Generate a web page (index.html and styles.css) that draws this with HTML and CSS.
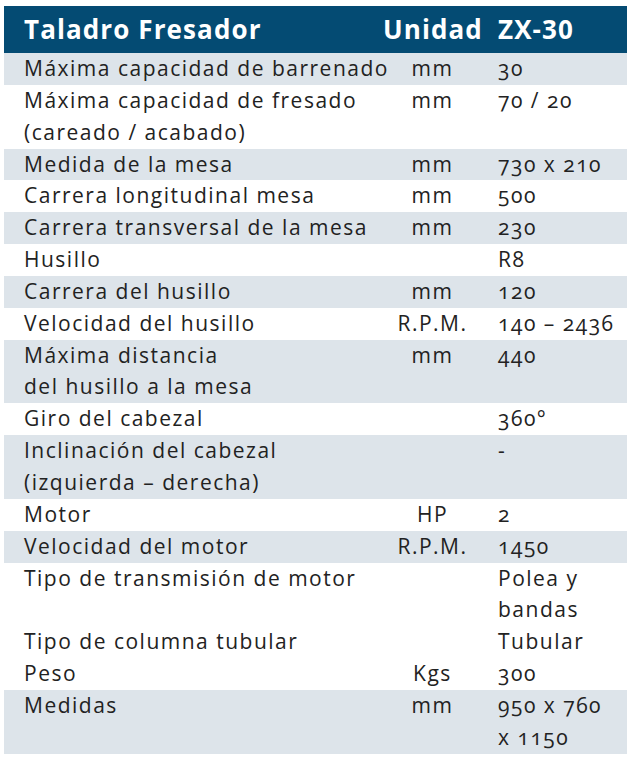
FILE: index.html
```html
<!DOCTYPE html>
<html lang="es">
<head>
<meta charset="utf-8">
<title>Taladro Fresador ZX-30</title>
<link rel="stylesheet" href="styles.css">
</head>
<body>
<table class="specs">
  <colgroup>
    <col class="c-name">
    <col class="c-unit">
    <col class="c-val">
  </colgroup>
  <thead>
    <tr><th class="name">Taladro Fresador</th><th class="unit">Unidad</th><th class="val">ZX-30</th></tr>
  </thead>
  <tbody>
    <tr class="alt"><td class="name">Máxima capacidad de barrenado</td><td class="unit">mm</td><td class="val">30</td></tr>
    <tr><td class="name">Máxima capacidad de fresado<br>(careado / acabado)</td><td class="unit">mm</td><td class="val">70 / 20</td></tr>
    <tr class="alt"><td class="name">Medida de la mesa</td><td class="unit">mm</td><td class="val">730 x 210</td></tr>
    <tr><td class="name">Carrera longitudinal mesa</td><td class="unit">mm</td><td class="val">500</td></tr>
    <tr class="alt"><td class="name">Carrera transversal de la mesa</td><td class="unit">mm</td><td class="val">230</td></tr>
    <tr><td class="name">Husillo</td><td class="unit"></td><td class="val">R8</td></tr>
    <tr class="alt"><td class="name">Carrera del husillo</td><td class="unit">mm</td><td class="val">120</td></tr>
    <tr><td class="name">Velocidad del husillo</td><td class="unit">R.P.M.</td><td class="val">140 – 2436</td></tr>
    <tr class="alt"><td class="name">Máxima distancia<br>del husillo a la mesa</td><td class="unit">mm</td><td class="val">440</td></tr>
    <tr><td class="name">Giro del cabezal</td><td class="unit"></td><td class="val">360°</td></tr>
    <tr class="alt"><td class="name">Inclinación del cabezal<br>(izquierda – derecha)</td><td class="unit"></td><td class="val">-</td></tr>
    <tr><td class="name">Motor</td><td class="unit">HP</td><td class="val">2</td></tr>
    <tr class="alt"><td class="name">Velocidad del motor</td><td class="unit">R.P.M.</td><td class="val">1450</td></tr>
    <tr><td class="name">Tipo de transmisión de motor</td><td class="unit"></td><td class="val">Polea y<br>bandas</td></tr>
    <tr><td class="name">Tipo de columna tubular</td><td class="unit"></td><td class="val">Tubular</td></tr>
    <tr><td class="name">Peso</td><td class="unit">Kgs</td><td class="val">300</td></tr>
    <tr class="alt"><td class="name">Medidas</td><td class="unit">mm</td><td class="val">950 x 760<br>x 1150</td></tr>
  </tbody>
</table>
</body>
</html>
```

FILE: styles.css
```css
html, body {
  margin: 0;
  padding: 0;
  background: #ffffff;
}
body {
  padding: 6px 4px 0 4px;
  font-family: "Open Sans", "Lato", sans-serif;
  font-variant-numeric: oldstyle-nums;
  color: #222222;
}
.specs {
  border-collapse: collapse;
  border-spacing: 0;
  table-layout: fixed;
  width: 623px;
}
.c-name { width: 379px; }
.c-unit { width: 99px; }
.c-val { width: 145px; }
.specs th {
  background: #044b73;
  color: #ffffff;
  font-weight: 700;
  font-size: 26px;
  letter-spacing: 1.1px;
  font-variant-numeric: lining-nums;
  height: 47px;
  padding: 0;
  line-height: 47px;
  white-space: nowrap;
  box-sizing: border-box;
}
.specs td {
  font-size: 21px;
  line-height: 31.85px;
  letter-spacing: 1.5px;
  padding: 0;
  vertical-align: top;
  white-space: nowrap;
}
.specs .name {
  text-align: left;
  padding-left: 20px;
}
.specs .unit {
  text-align: center;
}
.specs .val {
  text-align: left;
  padding-left: 16px;
}
.specs tr.alt td {
  background: #dde4ea;
}
```
